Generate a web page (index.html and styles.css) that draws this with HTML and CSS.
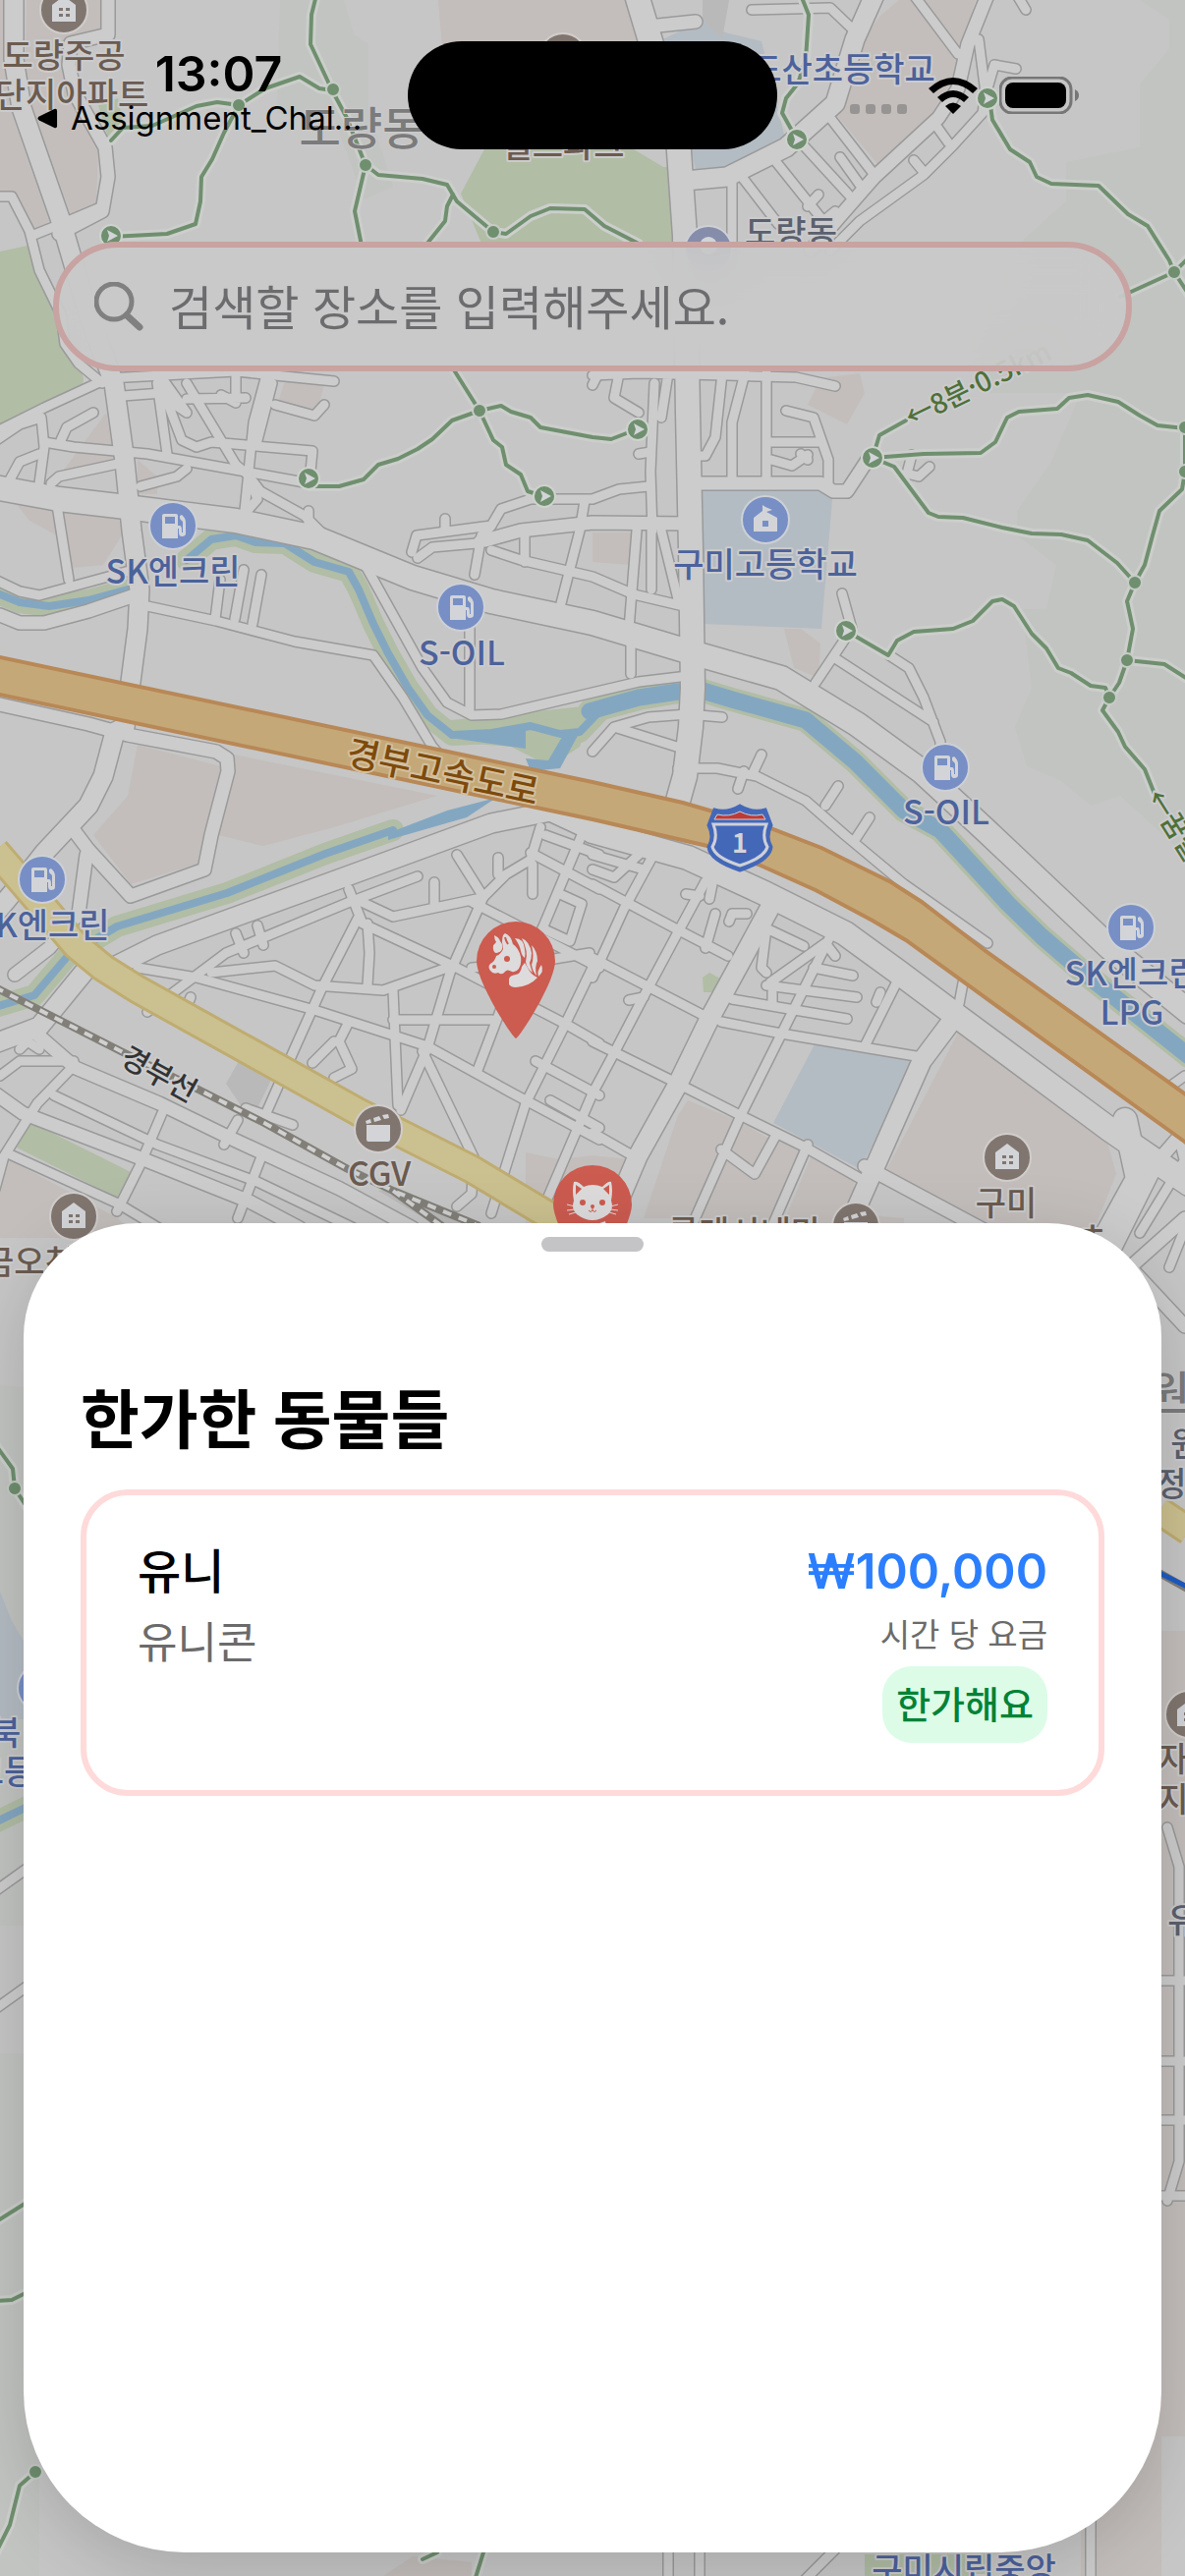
FILE: index.html
```html
<!DOCTYPE html>
<html lang="ko">
<head>
<meta charset="utf-8">
<meta name="viewport" content="width=device-width, initial-scale=1">
<title>한가한 동물들</title>
<link rel="stylesheet" href="styles.css">
</head>
<body>
<div class="screen">
  <svg class="map" viewBox="0 0 1206 2622" preserveAspectRatio="xMidYMin slice" role="img" aria-label="지도">
    <defs>
      <g id="roads">
        <!-- arterial roads -->
        <g class="w26">
          <path d="M-5 496L60 508L120 515L160 520L240 530L320 547L420 588L500 612L603 634L700 663L795 690L872 737L938 785L1003 845L1130 965L1210 1030"/>
          <path d="M648 -5L663 45L690 140L697 240L700 420L703 560L705 700L703 740L697 790L688 822"/>
          <path d="M603 846L700 873L780 910L860 950L915 990L975 1035L1130 1150L1210 1205"/>
          <path d="M1145 1140L1158 1200L1125 1260"/>
        </g>
        <g class="w20">
          <path d="M14 -5L14 60L22 110L62 225L90 320L116 390L127 470L134 540L142 600L140 640L127 740L117 745L105 790L90 820L45 868L20 900L-5 930"/>
          <path d="M110 987L160 962L350 893L500 838L560 826L603 846"/>
          <path d="M85 990L40 1045L-5 1062"/>
          <path d="M784 923L757 973L722 1037L688 1107L649 1177L618 1250"/>
          <path d="M968 1040L938 1080L888 1193L865 1245"/>
          <path d="M890 -5L870 40L850 105L800 150L740 180L697 184"/>
        </g>
        <g class="w14">
          <path d="M110 -5L110 35L72 44L70 66L76 95L107 150L110 180L104 215L60 238"/>
          <path d="M-5 716L90 737L130 748L220 765L231 772L232 785L215 850L208 885L133 912L90 865L75 845"/>
          <path d="M38 1053L77 1087L162 1123L238 1160L346 1210L420 1250"/>
          <path d="M-5 1113L23 1133L146 1180L254 1223L305 1250"/>
          <path d="M494 550L530 540L603 532L700 533"/>
          <path d="M700 492H835L848 500L862 500L885 465"/>
          <path d="M880 1187L1007 1255"/>
          <path d="M1005 -5L985 45L975 90L955 120L890 180L855 220L825 255"/>
          <path d="M660 27L708 22"/>
          <path d="M0 626L20 634L45 634L90 622L140 605"/>
          <path d="M88 870L80 930L50 965L15 992"/>
          <path d="M1206 1150L1180 1180L1120 1300"/>
          <path d="M1206 1240L1150 1290L1206 1350"/>
        </g>
        <g class="w9">
          <path d="M-5 200L12 200L30 235L40 275L62 320L66 350L80 370L104 390"/>
          <path d="M32 240L62 228L100 212"/>
          <path d="M-5 440L45 415L110 385L240 378L340 388"/>
          <path d="M125 403L165 400M165 385L190 420L175 410L165 385M190 406L250 405M240 380V410L225 402"/>
          <path d="M-5 449L20 432L42 425L45 455L40 492"/>
          <path d="M45 450L75 455L150 462L250 480L315 492"/>
          <path d="M8 492L20 470L40 462M52 492L60 485L120 472M143 495L180 485L190 477M62 448L68 435L95 420"/>
          <path d="M160 390L170 462M165 395L185 448L200 455L215 450L318 459L315 490"/>
          <path d="M190 390L240 473L252 483L265 500L310 525L330 545"/>
          <path d="M272 378L258 430L250 510L248 528M277 390L262 448M280 412L320 423L330 412"/>
          <path d="M252 483L262 508L248 524M314 520V535"/>
          <path d="M57 508L70 590M-5 590L20 602L40 606L110 587L135 580"/>
          <path d="M150 617L220 632L300 653L380 667L410 710L440 760L455 777L520 790"/>
          <path d="M224 590L219 630M248 580L239 630M266 585L257 635"/>
          <path d="M366 565L430 680L455 715L480 728L510 727L603 705L650 694L700 688"/>
          <path d="M478 640V722"/>
          <path d="M419 562L424 545L500 535L510 518L540 508L603 508L630 498L660 495"/>
          <path d="M453 528V540M425 568L440 557L485 553L500 535M483 585L490 545M500 560L530 570L603 587L645 605L700 618M534 540V572M595 510L590 540L570 618"/>
          <path d="M765 10L845 8L868 30M930 -5L975 55M1035 -5L1044 10"/>
          <path d="M996 40L1003 95L1000 115L970 148L940 178L875 225L845 255M1005 90L1012 66L1034 70"/>
          <path d="M845 120L890 178M815 145L870 205M790 165L838 225L850 215M755 180L792 228M745 185V250M855 160L875 188M930 163L940 175M950 124L965 145M822 210L833 198"/>
          <path d="M603 382L650 380L740 382L810 384L850 393M630 380L625 405L650 420M680 380L673 425M666 390L662 480L664 540"/>
          <path d="M735 380L728 445L718 464H708M758 380L745 430V490M780 380V485M603 392L610 378"/>
          <path d="M800 418L828 425L843 468L843 492M785 450L835 450M785 468L806 474L822 463M650 462L662 460M815 462L822 468"/>
          <path d="M928 463L923 482L935 485L946 475"/>
          <path d="M648 540L640 640M663 540V600M673 540L690 610M642 650V686"/>
          <path d="M603 765L625 740L660 730L700 727L735 730M625 740L695 762"/>
          <path d="M690 782L730 782L770 790L820 815L860 850L920 900L1005 960M775 768L767 785M757 785L751 803M853 800L840 820M885 832L870 855"/>
          <path d="M857 604L867 640L830 695M850 670L950 735M905 667L925 680L940 710L957 755V800"/>
          <!-- streets of the old town -->
          <path d="M465 870L492 913L458 990L435 1067L408 1130"/>
          <path d="M492 913L515 890L540 875L550 842M507 873V890M542 910V880"/>
          <path d="M355 905L369 940L461 983L577 1043L610 1062"/>
          <path d="M364 935L327 1007L300 1067L270 1135M374 940L376 970L374 1003"/>
          <path d="M215 990L280 983L320 1003L390 1008L455 985"/>
          <path d="M140 985L200 995L320 1028L435 1065L520 1112L610 1160"/>
          <path d="M355 1040L345 1060L358 1088L340 1097M340 1060L318 1082"/>
          <path d="M400 1008L405 1125M430 1070L482 1178L480 1215L465 1228M400 1038H500M480 918L610 985"/>
          <path d="M368 918L400 933L485 915M442 898V920M425 892L356 918L230 970L150 1030"/>
          <path d="M240 950L248 970M262 942L268 962M194 1015L188 1030"/>
          <path d="M592 850L550 950M603 985L573 1047L535 1123L500 1235M520 1000L485 1092M480 985L540 980L600 970"/>
          <path d="M555 850L610 870M540 868L610 905M570 910L592 920L580 958L552 945"/>
          <path d="M250 1128L298 1145M242 1140L228 1165M165 1133L142 1187L119 1233M265 1180L242 1240M73 1087L38 1123L4 1177L-5 1210M55 1115L160 1165L262 1203M10 1175L120 1225L165 1252M262 1203L360 1250M0 1095L20 1080L75 1080M20 1068L28 1060L40 1068"/>
          <path d="M545 1080L610 1115M560 1120L610 1148"/>
          <!-- station side grid -->
          <path d="M665 870L635 925L603 995M718 897L691 947L661 1003L626 1070L603 1113L555 1225"/>
          <path d="M845 953L795 1053L755 1133L703 1250M914 997L880 1065M734 1170L768 1195L790 1155M822 1165L785 1250M880 1200L865 1240"/>
          <path d="M603 900L691 947L741 973M603 975L661 1005L715 1033M603 1060L684 1100L757 1137L818 1167L885 1205M603 1153L645 1177"/>
          <path d="M734 1040L795 1052L938 1076M745 1017L803 1027L862 1037M780 1003L872 1015M828 985L868 993M784 1000L840 960M818 963L780 945L775 985L780 990M840 960L850 973"/>
          <path d="M725 900L722 915M698 910L712 912M728 930L718 965M760 930L745 930L742 938M786 1010V1020M896 1010L892 1020M640 1018L655 1015M603 870L655 885M603 885L625 893L650 870"/>
          <path d="M976 1022L982 990M1206 1095L1185 1110M1195 1140L1205 1180M1160 1255L1206 1180M1190 1290L1206 1250"/>
          <path d="M-5 1925L30 1900M-5 2045L30 2020M1188 1860L1200 1900V2200L1188 2240M1182 2016H1206M1182 2098H1206M1182 2158H1206M1182 2235H1206"/>
          <path d="M680 2590V2630M712 2590V2630M850 2595L815 2630M1110 2560V2630"/>
        </g>
      </g>
      <g id="trails">
        <path d="M322 -5L317 15L316 45L338 92L353 120L372 168"/>
        <path d="M113 143L125 130L155 128L200 108L221 104L243 107L270 90L305 78L325 90L338 92"/>
        <path d="M243 107L228 135L216 162L205 180L204 205L199 228L170 238L113 241"/>
        <path d="M372 168L385 178L430 182L455 188L465 205L502 236L515 238L540 220L560 212L595 213L615 230L650 248"/>
        <path d="M372 168L361 215L368 250M461 198L455 210L453 225L433 250M461 375L488 418"/>
        <path d="M488 418L460 428L440 447L425 457L405 467L385 473L370 488L345 495L315 495"/>
        <path d="M488 418L502 448L511 455L515 473L530 483L537 500L553 505"/>
        <path d="M488 418L510 413L520 419L540 425L550 435L603 445L622 447L648 437"/>
        <path d="M815 -5L823 15L820 60L812 85L800 100L796 115L811 142"/>
        <path d="M1007 100L1010 122L1028 152L1048 165L1055 180L1070 187L1118 189L1148 218L1168 230L1190 265L1195 277L1140 302M1195 277L1210 300M1195 277L1210 262"/>
        <path d="M888 466L895 443L922 428"/>
        <path d="M888 466L940 462L998 461L1013 450L1025 425L1037 419L1076 416L1088 405L1107 402L1138 409L1160 423L1178 433L1206 436"/>
        <path d="M888 466L910 475L945 522L955 526L980 527L1020 537L1050 543L1080 544L1107 550L1137 573L1155 593"/>
        <path d="M1206 435V480L1203 498L1180 520L1173 545L1165 575L1155 593L1147 612L1153 640L1147 672L1139 695L1129 710L1122 723L1138 745L1145 760L1165 783L1175 808"/>
        <path d="M861 642L904 667L913 652L930 643L970 640L990 632L1010 612L1020 610L1032 617L1050 645L1065 660L1077 680L1090 685L1110 698L1125 700L1129 710"/>
        <path d="M1147 672L1185 676L1210 692"/>
        <path d="M-5 1470L13 1495L15 1515L30 1538M-5 2262L30 2240M-5 2342L12 2341L30 2332M-5 2600L10 2570L20 2530L36 2516M430 2605L445 2598M482 2630L492 2598"/>
      </g>
      <path id="river" d="M-5 603L20 613L50 617L90 611L130 600M190 570L215 549L240 545L260 552L290 553L320 572L355 582L365 600L380 635L395 665L415 700L435 728L460 748L500 746L540 739L570 747L590 745L612 722L650 712L690 705M400 845L331 869L231 909L119 943L69 973L35 1013L-5 1025M-5 1855L30 1838"/>
      <path id="river-wide" d="M600 724L650 710L690 704L715 703L745 712L820 733L870 775L920 825L957 845L1026 920L1060 953L1103 990L1210 1075"/>
      <g id="fuel">
        <circle r="24" class="poi-blue"/>
        <path class="poi-glyph" fill-rule="evenodd" d="M-11 13V-10Q-11 -12 -9 -12H3Q5 -12 5 -10V0H7Q9 0 9 5V7H10V-4L7 -7V-10L9 -11Q13 -8 13 -3V8Q13 11 9 11Q6 11 6 7V3H5V13ZM-8 -9V-2H2V-9Z"/>
      </g>
      <g id="house">
        <circle r="24" class="poi-brown"/>
        <path class="poi-glyph" fill-rule="evenodd" d="M-12 12V-5L0 -14L12 -5V12ZM-5 -2V1H-1V-2ZM2 -2V1H6V-2ZM-5 4V7H-1V4ZM2 4V7H6V4Z"/>
      </g>
      <g id="cinema">
        <circle r="24" class="poi-brown"/>
        <path class="poi-glyph" d="M-12 -4H12V11Q12 13 10 13H-10Q-12 13 -12 11ZM-13 -8L-8 -10L-7 -6L-12 -5ZM-5 -11L1 -13L3 -9L-4 -7ZM4 -14L10 -15L11 -11L6 -10Z"/>
      </g>
      <g id="way">
        <circle r="11" class="way"/>
        <path class="poi-glyph" d="M-4 -6L7 0L-4 6L-2 0Z"/>
      </g>
      <path id="pin" d="M0 79C-3 79 -40 22 -40 0A40 40 0 1 1 40 0C40 22 3 79 0 79Z"/>
    </defs>

    <rect class="land" width="1206" height="2622"/>
    <path class="hill" d="M1160 0L1190 20L1190 50L1160 85V150L1085 165V205L1040 245L1000 400L1100 400L1070 470L1035 520V545L1075 575L1065 620L1040 620L1050 700L1033 740L1045 780L1080 795L1110 820L1140 810L1206 870V0ZM285 0H350L360 35L375 45V110L400 190L370 203L340 120L282 115ZM0 1410L24 1412V1960H0ZM0 2090H40V2622H0Z"/>
    <path class="blue-area" d="M675 40L715 20L738 33L775 42L800 145L740 173H708L690 100ZM712 490H837L848 497L836 640L714 635ZM829 1063L935 1078L875 1190L787 1143ZM0 1620L12 1650L24 1670V1750H0Z"/>
    <path class="beige" d="M27 0H103V30L70 48V75L100 145L98 210L72 218L25 90ZM0 0H5L10 110L50 225L35 237L12 195H0ZM446 0H645L655 45L600 60L450 50ZM897 15L915 0H993L970 80L945 120L894 168L852 118L870 50ZM12 507L120 520L124 545L105 575L75 578L58 545L30 530ZM108 420L118 475L65 478ZM140 468L160 485V503H140ZM290 388L330 392L322 420L282 412ZM835 385L875 380L880 400L862 432L822 412ZM603 542H645L643 575L603 572ZM798 640L815 640L835 655L833 690L808 680ZM140 758L225 780L205 878L133 900L95 850L130 810ZM238 768L445 810L340 842L268 861L222 850ZM975 1051H988L1125 1155L1136 1195L1110 1260H1007L899 1197ZM700 1120L750 1140L705 1240H655L690 1135ZM755 1143L785 1160L770 1190L740 1170ZM0 1175L120 1240L140 1260H0ZM535 1173L570 1180L603 1176L640 1180L615 1250H535ZM738 1178L770 1195L790 1160L815 1172L785 1245H705ZM825 1178L870 1200L865 1235L920 1240V1250H795ZM1182 1660H1206V2480H1182ZM1100 2560L1182 2400V2622H1100ZM390 2622L420 2602L480 2608V2622Z"/>
    <path class="gray-area" d="M243 1080L278 1095L262 1128L245 1125L230 1103ZM385 1212L440 1245H480L400 1210ZM715 0H742L735 40L715 20Z"/>
    <path class="green" d="M0 256L28 250L62 320L85 385L83 402L25 422L0 432ZM493 152H645L675 170H686V248H490L469 197ZM31 1142L133 1193L119 1219L17 1168ZM715 995L722 990L733 996L727 1010H716ZM100 107L120 100L125 125L110 140ZM440 735L603 718L590 760L560 780L520 760L460 755ZM880 2600H1010V2622H880Z"/>

    <use href="#river" class="bank"/>
    <use href="#river-wide" class="bank bank-wide"/>
    <use href="#river" class="water"/>
    <use href="#river-wide" class="water water-wide"/>
    <path class="water-fill" d="M440 735L460 750L535 738V762L465 752ZM535 772L558 774L575 745H590L570 782L540 785ZM455 825L505 812L475 832L395 855V848Z"/>

    <use href="#roads" class="road-casing"/>
    <use href="#roads" class="road-fill"/>

    <path class="yellow-casing" d="M-5 866L50 930L77 962L105 985L140 1007L365 1132L480 1190L580 1250M1180 1538L1210 1558"/>
    <path class="yellow-road" d="M-5 866L50 930L77 962L105 985L140 1007L365 1132L480 1190L580 1250M1180 1538L1210 1558"/>
    <path class="rail" d="M-5 1005L58 1037L123 1070L200 1108L269 1143L354 1190L400 1212L488 1248M400 1212L450 1248M1178 1600L1210 1618"/>
    <path class="rail-dash" d="M-5 1005L58 1037L123 1070L200 1108L269 1143L354 1190L400 1212L488 1248M400 1212L450 1248"/>
    <path class="subway" d="M1178 1600L1210 1616"/>
    <path class="highway" d="M-5 668L603 796L695 817L784 843L836 863L907 898L938 918L1003 968L1211 1117V1166L922 957L888 937L830 906L772 880L720 861L603 834L-5 706Z"/>

    <use href="#trails" class="trail-halo"/>
    <use href="#trails" class="trail"/>
    <g class="node">
      <circle cx="339" cy="91" r="7"/><circle cx="243" cy="107" r="7"/><circle cx="372" cy="168" r="7"/><circle cx="502" cy="236" r="7"/>
      <circle cx="488" cy="418" r="7"/><circle cx="1195" cy="277" r="7"/><circle cx="1155" cy="593" r="7"/><circle cx="1147" cy="672" r="7"/>
      <circle cx="1129" cy="710" r="7"/><circle cx="1206" cy="435" r="7"/><circle cx="1206" cy="480" r="7"/><circle cx="15" cy="1515" r="7"/><circle cx="36" cy="2516" r="7"/>
    </g>
    <use href="#way" x="113" y="240"/><use href="#way" x="811" y="142"/><use href="#way" x="1005" y="100"/><use href="#way" x="649" y="437"/>
    <use href="#way" x="888" y="466"/><use href="#way" x="861" y="642"/><use href="#way" x="314" y="487"/><use href="#way" x="554" y="505"/>

    <use href="#fuel" x="176" y="535"/><use href="#fuel" x="469" y="618"/><use href="#fuel" x="962" y="781"/><use href="#fuel" x="43" y="895"/><use href="#fuel" x="1151" y="944"/>
    <use href="#house" x="65" y="10"/><use href="#house" x="75" y="1238"/><use href="#house" x="1025" y="1178"/><use href="#house" x="573" y="58"/><use href="#house" x="1210" y="1745"/>
    <use href="#cinema" x="385" y="1149"/><use href="#cinema" x="871" y="1248"/>
    <circle class="poi-blue" cx="779" cy="529" r="24"/>
    <path class="poi-glyph" fill-rule="evenodd" d="M767 541V527L776 520V514L779 516L786 519L780 521L791 527V541ZM776 530V536H782V530Z"/>
    <circle class="poi-violet" cx="721" cy="254" r="24"/>
    <circle class="poi-glyph" cx="721" cy="250" r="9"/>
    <circle class="poi-blue" cx="42" cy="1718" r="24"/>

    <!-- route shield -->
    <path class="shield-edge" d="M727 824Q740 828 753 820Q766 828 779 824L785 840Q779 852 785 862Q784 876 753 886Q722 876 721 862Q727 852 721 840Z"/>
    <path class="shield-red" d="M727 834L730 829Q742 832 753 826Q764 832 776 829L779 834Z"/>
    <path class="shield-ring" d="M726 839Q731 852 725 862Q728 873 753 881Q778 873 781 862Q775 852 780 839Z"/>
    <text class="shield-number" x="753" y="868">1</text>

    <g class="label">
      <g class="place">
        <text x="176" y="594">SK엔크린</text><text x="470" y="677">S-OIL</text><text x="779" y="587">구미고등학교</text><text x="963" y="839">S-OIL</text>
        <text x="43" y="954">SK엔크린</text><text x="1152" y="1003">SK엔크린</text><text x="1152" y="1043">LPG</text><text x="858" y="83">도산초등학교</text>
        <text x="-10" y="1776">경북</text><text x="4" y="1816">고등</text><text x="981" y="2628">구미시립중앙</text>
      </g>
      <g class="building">
        <text x="65" y="69">도량주공</text><text x="73" y="109">단지아파트</text><text x="573" y="160">힐스파크</text><text x="386" y="1207">CGV</text>
        <text x="1024" y="1237">구미</text><text x="758" y="1267">롯데시네마</text><text x="30" y="1297">금오천</text><text x="1112" y="1270">ㅊ</text>
        <text x="1194" y="1803">자</text><text x="1194" y="1844">지</text>
      </g>
      <g class="office">
        <text x="805" y="249">도량동</text><text x="1207" y="1482">원</text><text x="1192" y="1523">정</text><text x="1204" y="1967">유</text>
      </g>
      <text class="district" x="368" y="147">도량동</text><text class="district" x="1190" y="1434">원</text>
      <text class="highway-name" transform="rotate(12 451 785)" x="451" y="799">경부고속도로</text>
      <text class="rail-name" transform="rotate(29 162 1093)" x="162" y="1104">경부선</text>
      <text class="trail-name" transform="rotate(-26 924 428)" x="924" y="436">←8분·0.5km</text>
      <text class="trail-name" transform="rotate(58 1174 806)" x="1174" y="816">←꿈길</text>
    </g>

    <!-- unicorn marker -->
    <g transform="translate(525 978)">
      <use href="#pin" class="pin"/>
      <path class="animal" d="M-14 -19Q-14 -27 -11 -28Q-5 -26 -3 -17Q3 -13 5 -4Q6 4 3 8Q0 12 -4 11Q-9 8 -11 11Q-14 15 -18 12Q-23 14 -26 10Q-29 6 -26 3Q-21 0 -20 -5Q-15 -7 -13 -12Z"/>
      <path class="animal" d="M6 6Q5 13 0 14Q-7 15 -7 19V24Q-5 27 0 27Q14 26 22 17Q15 14 12 7L9 2Z"/>
      <path class="animal" d="M-22 -26Q-17 -24 -16 -20Q-13 -17 -14 -12Q-15 -9 -17 -9Q-22 -6 -23 -12Q-24 -16 -20 -19Q-22 -22 -22 -26Z"/>
      <path class="animal" d="M-1 -23Q8 -23 9 -12Q10 -7 9 -3Q6 -5 5 -10Q4 -16 -1 -23ZM6 -23Q14 -20 16 -8Q16 -2 14 2Q15 7 17 12Q11 8 10 1Q13 -10 6 -23ZM16 -16Q22 -10 22 0Q19 6 21 15Q17 11 16 4Q19 -4 16 -16ZM26 4Q29 11 23 16Q21 11 26 4Z"/>
      <path class="ear" d="M-11 -24Q-10 -20 -8 -17"/>
      <circle class="animal-dot" cx="-9" cy="-2" r="3"/><circle class="animal-dot" cx="-22" cy="6" r="2"/>
    </g>
    <!-- cat marker -->
    <g transform="translate(603 1226)">
      <use href="#pin" class="pin"/>
      <path class="animal" d="M-19 -23Q-15 -24 -9 -18Q0 -22 10 -18Q16 -24 19 -23Q21 -15 19 -4Q22 4 16 10Q8 16 0 16Q-8 16 -16 10Q-22 4 -19 -4Q-21 -15 -19 -23ZM-13 19Q0 23 13 17L16 30H-16Z"/>
      <path class="animal-dot" d="M-17 -20L-17 -10L-11 -16ZM17 -20L17 -10L11 -16Z"/>
      <path class="whiskers" d="M-26 0L-18 2M-26 6L-18 5M-24 10L-17 8M26 0L18 2M26 6L18 5M24 10L17 8"/>
      <path class="mouth" d="M0 3V6M-4 6Q-2 9 0 6Q2 9 4 6"/>
      <circle class="animal-dot" cx="-10" cy="-2" r="3"/><circle class="animal-dot" cx="10" cy="-2" r="3"/><circle class="animal-dot" cx="0" cy="2" r="2"/>
    </g>
  </svg>

  <header class="status">
    <div class="status-left">
      <time class="clock">13:07</time>
      <a class="back" href="#"><svg class="back-icon" viewBox="0 0 22 22" aria-hidden="true"><path d="M2 9L18 1Q21 0 21 3V19Q21 22 18 21L2 13Q-1 11 2 9Z"/></svg>Assignment_Chal...</a>
    </div>
    <div class="island"></div>
    <div class="status-right">
      <svg class="cell" viewBox="0 0 58 10" aria-hidden="true"><rect width="10" height="10" rx="3"/><rect x="16" width="10" height="10" rx="3"/><rect x="32" width="10" height="10" rx="3"/><rect x="48" width="10" height="10" rx="3"/></svg>
      <svg class="wifi" viewBox="0 0 50 37" aria-hidden="true"><path d="M0 11Q25 -11 50 11L45 16Q25 -2 5 16ZM9 20Q25 6 41 20L36 25Q25 15 14 25ZM17 29Q25 22 33 29L25 37Z"/></svg>
      <svg class="battery" viewBox="0 0 82 38" aria-hidden="true"><rect class="battery-shell" x="1" y="1" width="72" height="36" rx="12"/><rect x="6" y="6" width="62" height="26" rx="8"/><path class="battery-cap" d="M77 13Q81 15 81 19Q81 23 77 25Z"/></svg>
    </div>
  </header>

  <form class="search" role="search">
    <label class="search-label" for="place" aria-label="장소 검색">
      <svg class="search-icon" viewBox="0 0 50 50" aria-hidden="true"><circle cx="20" cy="20" r="18"/><path d="M33 34L46 46"/></svg>
    </label>
    <input class="search-input" id="place" type="text" placeholder="검색할 장소를 입력해주세요.">
  </form>

  <main class="sheet">
    <div class="grabber"></div>
    <h1 class="title">한가한 동물들</h1>
    <article class="card">
      <div class="who">
        <h2 class="name">유니</h2>
        <p class="kind">유니콘</p>
      </div>
      <div class="fee">
        <p class="price">₩100,000</p>
        <p class="unit">시간 당 요금</p>
        <span class="badge">한가해요</span>
      </div>
    </article>
  </main>
</div>
</body>
</html>
```
FILE: styles.css
```css
* { box-sizing: border-box; }

body {
  margin: 0;
  font-family: Inter, "Noto Sans CJK KR", sans-serif;
  color: #000;
}

h1, h2, p { margin: 0; }

.screen {
  position: relative;
  display: flex;
  flex-direction: column;
  min-height: 100vh;
  padding-bottom: 24px;
  overflow: hidden;
}

/* Map */
.map {
  position: absolute;
  inset: 0;
  width: 100%;
  height: 100%;
}

.land { fill: #c6c6c6; }
.hill { fill: #c2c4c1; }
.beige { fill: #c3bebb; }
.gray-area { fill: #b9b9b9; }
.blue-area { fill: #b4bcc3; }
.green { fill: #b1bda5; }

.bank, .water, .road-casing, .road-fill, .trail, .trail-halo {
  fill: none;
  stroke-linejoin: round;
  stroke-linecap: round;
}
.bank { stroke: #b1bda5; stroke-width: 22px; }
.bank-wide { stroke-width: 24px; }
.water { stroke: #84a7c1; stroke-width: 8px; }
.water-wide { stroke-width: 17px; }
.water-fill { fill: #84a7c1; }

.road-casing { --edge: 3px; stroke: #9a9a9a; }
.road-fill { --edge: 0px; stroke: #cccccc; }
.w26 { stroke-width: calc(24px + var(--edge)); }
.w20 { stroke-width: calc(19px + var(--edge)); }
.w14 { stroke-width: calc(13px + var(--edge)); }
.w9 { stroke-width: calc(9px + var(--edge)); }

.yellow-casing, .yellow-road, .rail, .rail-dash, .subway {
  fill: none;
  stroke-linejoin: round;
}
.yellow-casing { stroke: #bfac70; stroke-width: 31px; }
.yellow-road { stroke: #cbc08f; stroke-width: 25px; }
.rail { stroke: #827f79; stroke-width: 8px; }
.rail-dash { stroke: #d0d0d0; stroke-width: 4px; stroke-dasharray: 9px 8px; }
.subway { stroke: #1c5cc4; stroke-width: 5px; }
.highway { fill: #c5a877; stroke: #b88856; stroke-width: 4px; }

.trail { stroke: #6f8f6e; stroke-width: 4px; }
.trail-halo { stroke: #cbcecb; stroke-width: 10px; }
.node { fill: #6f8f6e; stroke: #c6cbc6; stroke-width: 2px; }
.way { fill: #6f8f6e; stroke: #ced2ce; stroke-width: 2px; }

.poi-blue { fill: #778fc5; stroke: #cdd0d6; stroke-width: 2px; }
.poi-violet { fill: #868dab; stroke: #cdd0d6; stroke-width: 2px; }
.poi-brown { fill: #80766f; stroke: #d0cdcb; stroke-width: 2px; }
.poi-glyph { fill: #d2d4d8; }

.shield-edge { fill: #4468b8; stroke: #4468b8; stroke-width: 3px; }
.shield-red { fill: #bd3a37; stroke: #d0cfd2; stroke-width: 1px; }
.shield-ring { fill: #4468b8; stroke: #ced0d8; stroke-width: 3px; }
.shield-number { fill: #d4d4d8; font: 700 27px "Noto Sans CJK KR", sans-serif; text-anchor: middle; }

.label {
  font-family: "Noto Sans CJK KR", sans-serif;
  font-size: 34px;
  font-weight: 500;
  text-anchor: middle;
  paint-order: stroke;
  stroke: #cbcbcd;
  stroke-width: 4px;
  stroke-linejoin: round;
}
.place { fill: #4c629b; }
.building { fill: #6b5b50; }
.office { fill: #5b606e; }
.district { fill: #7b7b7b; font-size: 46px; stroke-width: 2px; }
.highway-name { fill: #7e4a0b; font-size: 36px; stroke: #d2c09f; }
.rail-name { fill: #333; font-size: 30px; }
.trail-name { fill: #4e7038; font-size: 28px; text-anchor: start; }

.pin { fill: #cc5b50; }
.animal { fill: #dddbdb; }
.animal-dot { fill: #cc5b50; }
.ear { fill: none; stroke: #cc5b50; stroke-width: 2px; }
.whiskers { fill: none; stroke: #dddbdb; stroke-width: 1px; }
.mouth { fill: none; stroke: #cc5b50; stroke-width: 1px; }

/* Status bar */
.status {
  position: relative;
  display: grid;
  grid-template-columns: 1fr 376px 1fr;
  padding-top: 42px;
}
.status-left {
  display: flex;
  flex-direction: column;
  align-items: center;
  padding: 4px 8px 0 38px;
}
.clock {
  font-size: 50px;
  font-weight: 600;
  line-height: 58px;
}
.back {
  display: flex;
  align-items: center;
  align-self: flex-start;
  gap: 13px;
  color: #000;
  font-size: 33px;
  line-height: 32px;
  font-weight: 400;
  text-decoration: none;
  white-space: nowrap;
}
.back-icon { width: 21px; height: 21px; }
.island {
  height: 110px;
  border-radius: 55px;
  background: #000;
}
.status-right {
  display: flex;
  align-items: center;
  gap: 22px;
  padding-left: 74px;
}
.cell { width: 58px; height: 10px; margin-top: 28px; fill: #979593; }
.wifi { width: 50px; height: 37px; }
.battery { width: 82px; height: 38px; }
.battery-shell { fill: none; stroke: #777; stroke-width: 3px; }
.battery-cap { fill: #777; }

/* Search */
.search {
  position: relative;
  display: flex;
  align-items: center;
  gap: 26px;
  height: 132px;
  margin: 94px 54px 0;
  padding: 0 36px;
  border: 6px solid #c8a3a1;
  border-radius: 66px;
  background: rgba(201, 201, 201, .85);
  backdrop-filter: blur(24px);
}
.search-label { display: flex; }
.search-icon {
  width: 50px;
  height: 50px;
  fill: none;
  stroke: #808080;
  stroke-width: 5px;
  stroke-linecap: round;
}
.search-icon path { stroke-width: 7px; }
.search-input {
  flex: 1;
  min-width: 0;
  padding: 0 0 4px;
  border: 0;
  outline: 0;
  background: none;
  color: #333;
  font: 400 48px/72px "Noto Sans CJK KR", sans-serif;
}
.search-input::placeholder { color: #6c6c6f; opacity: 1; }

/* Bottom sheet */
.sheet {
  position: relative;
  display: flex;
  flex-direction: column;
  min-height: calc(52vh - 10px);
  margin: auto 24px 0;
  padding: 14px 58px 58px;
  border-radius: 116px 116px 164px 164px;
  background: #fff;
  box-shadow: 0 16px 70px rgba(0, 0, 0, .16);
}
.grabber {
  align-self: center;
  width: 104px;
  height: 15px;
  border-radius: 8px;
  background: #c4c4c7;
}
.title {
  margin-top: 124px;
  font-size: 65px;
  font-weight: 600;
  line-height: 96px;
}
.card {
  display: flex;
  justify-content: space-between;
  margin-top: 22px;
  padding: 46px 52px 48px;
  border: 6px solid #ffdada;
  border-radius: 48px;
}
.name {
  font-size: 48px;
  font-weight: 500;
  line-height: 64px;
}
.kind {
  margin-top: 8px;
  color: #6b6b6b;
  font-size: 44px;
  line-height: 64px;
}
.fee {
  display: flex;
  flex-direction: column;
  align-items: flex-end;
}
.price {
  color: #2b7fff;
  font-size: 49px;
  font-weight: 600;
  line-height: 64px;
}
.unit {
  margin-top: 8px;
  color: #6b6b6b;
  font-size: 33px;
  line-height: 48px;
}
.badge {
  margin-top: 8px;
  padding: 12px 14px;
  border-radius: 30px;
  background: #dcfce7;
  color: #008236;
  font-size: 38px;
  font-weight: 500;
  line-height: 54px;
}
```
